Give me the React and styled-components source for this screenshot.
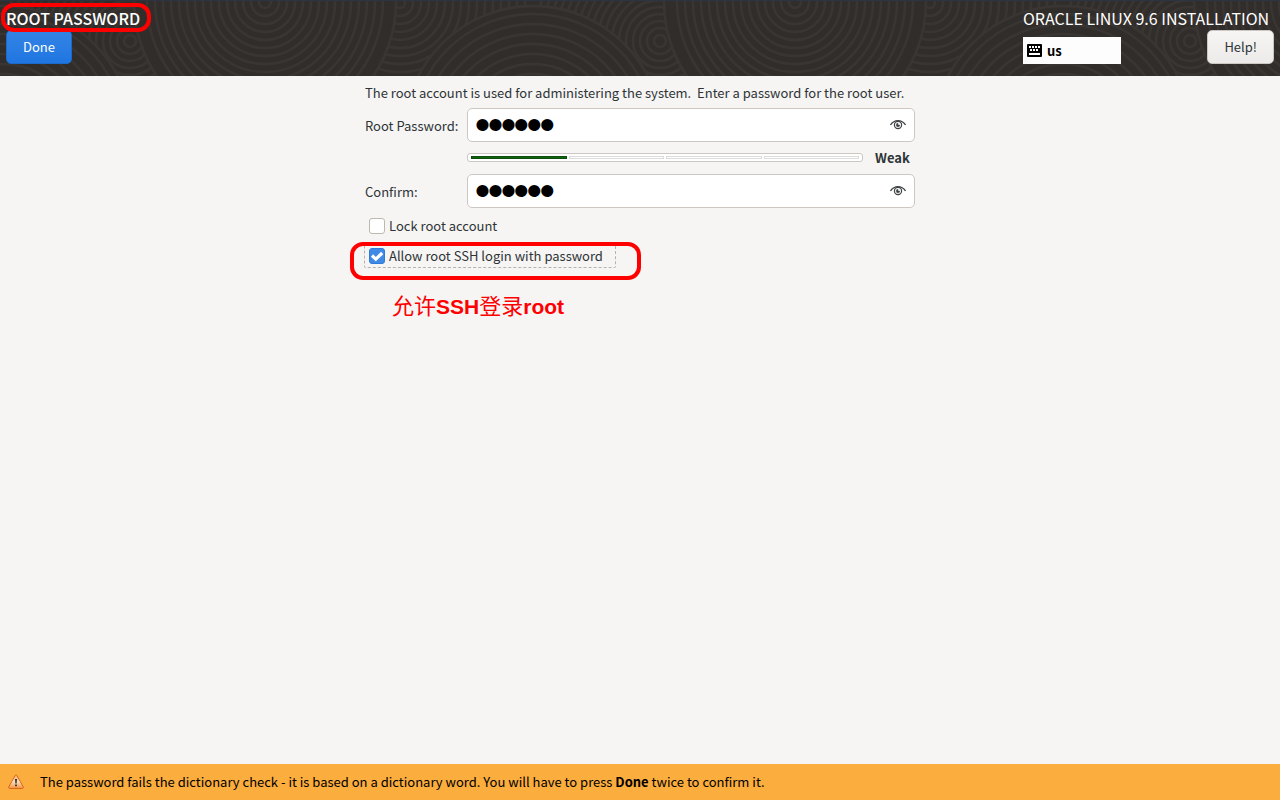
import React, { useState } from 'react';
import styled, { createGlobalStyle } from 'styled-components';

const GlobalStyle = createGlobalStyle`
  *, *::before, *::after { box-sizing: border-box; }
  html, body { margin: 0; background: #f6f5f4; }
  body, button, input {
    font-family: 'Noto Sans CJK SC', 'Noto Sans', sans-serif;
    font-size: 13px;
    line-height: 20px;
    color: #2e3436;
  }
`;

const Page = styled.div`
  display: flex;
  flex-direction: column;
  min-height: 100vh;
`;

const Header = styled.header`
  position: relative;
  display: flex;
  justify-content: space-between;
  padding: 6px 6px 12px;
  background: #312d2a;
  border-top: 1px solid #2c3442;
  overflow: hidden;
`;

const Texture = styled.svg`
  position: absolute;
  inset: 0;
  width: 100%;
  height: 100%;
`;

const HeaderSide = styled.div`
  position: relative;
  display: flex;
  flex-direction: column;
  gap: 1px;
  min-width: ${(p) => (p.$wide ? '251px' : '0')};
`;

const Title = styled.h1`
  position: relative;
  margin: 0;
  font-size: 16px;
  line-height: 22px;
  font-weight: ${(p) => (p.$strong ? 500 : 400)};
  color: #fff;
  white-space: nowrap;
`;

const ButtonRow = styled.div`
  display: flex;
  justify-content: space-between;
  align-items: flex-end;
`;

const Button = styled.button`
  height: 34px;
  padding: 0 16px;
  border-radius: 5px;
  border: 1px solid ${(p) => (p.$primary ? '#1b6acb' : '#cdc7c2')};
  background: ${(p) =>
    p.$primary
      ? 'linear-gradient(#3584e4, #1f76e1)'
      : 'linear-gradient(#f6f5f4, #edebe9)'};
  color: ${(p) => (p.$primary ? '#fff' : '#2e3436')};
`;

const LayoutButton = styled.button`
  display: flex;
  align-items: center;
  gap: 5px;
  width: 98px;
  height: 27px;
  padding: 0 4px;
  border: 0;
  background: #fdfdfd;
  color: #000;
  font-weight: 700;
`;

const Main = styled.main`
  flex: 1;
  display: flex;
  justify-content: center;
  align-items: flex-start;
  padding-top: 7px;
`;

const Form = styled.form`
  display: grid;
  grid-template-columns: 96px minmax(0, 1fr);
  column-gap: 6px;
  align-items: center;
  width: 100%;
  max-width: 550px;
`;

const Intro = styled.p`
  grid-column: 1 / -1;
  margin: 0 0 5px;
  white-space: pre-wrap;
`;

const Label = styled.label`
  padding-top: 2px;
`;

const Entry = styled.div`
  display: flex;
  align-items: center;
  height: 34px;
  padding: 0 8px;
  border: 1px solid #cdc7c2;
  border-radius: 5px;
  background: #fff;
`;

const Password = styled.input`
  flex: 1;
  min-width: 0;
  height: 32px;
  padding: 0;
  border: 0;
  outline: 0;
  background: transparent;
  color: #000;
  font-family: 'Liberation Sans', sans-serif;
  font-size: 37px;
  -webkit-text-stroke: 2px #000;
`;

const IconButton = styled.button`
  display: flex;
  padding: 0;
  border: 0;
  background: none;
`;

const Strength = styled.div`
  grid-column: 2;
  display: flex;
  align-items: center;
  height: 32px;
`;

const Meter = styled.div`
  flex: 1;
  display: flex;
  gap: 2px;
  height: 9px;
  margin-bottom: 2px;
  padding: 2px 3px;
  border: 1px solid #cdc7c2;
  border-radius: 3px;
  background: #fff;
`;

const Segment = styled.span`
  flex: 1;
  height: 3px;
  border: 1px solid ${(p) => (p.$filled ? '#0f4a0f' : '#dcdcda')};
  background: ${(p) => (p.$filled ? '#0a6a0a' : '#fff')};
`;

const StrengthText = styled.strong`
  width: 52px;
  padding-left: 12px;
  font-weight: 700;
`;

const Options = styled.div`
  grid-column: 1 / -1;
  display: flex;
  flex-direction: column;
  align-items: flex-start;
  gap: 6px;
  padding-top: 6px;
`;

const CheckLabel = styled.label`
  display: flex;
  align-items: center;
  gap: 4px;
  height: 24px;
  margin-left: -1px;
  padding: 0 12px 0 4px;
  border: 1px dashed ${(p) => (p.$focused ? '#b5b3b0' : 'transparent')};
  border-radius: 2px;
`;

const Checkbox = styled.input`
  appearance: none;
  width: 16px;
  height: 16px;
  margin: 0;
  border: 1px solid #bfb8b1;
  border-radius: 3px;
  background: #fff;

  &:checked {
    border-color: #2f7bd8;
    background: #3f8ae5
      url("data:image/svg+xml,%3Csvg xmlns='http://www.w3.org/2000/svg' viewBox='0 0 14 14'%3E%3Cpath d='M2 6.5l3.8 3.6L12.2 4' fill='none' stroke='white' stroke-width='3.2'/%3E%3C/svg%3E")
      center / 14px 14px no-repeat;
  }
`;

const Anchor = styled.div`
  position: relative;
`;

const Ring = styled.span`
  position: absolute;
  inset: ${(p) => p.$inset};
  border: 4px solid #fe0000;
  border-radius: 13px;
  pointer-events: none;
`;

const Note = styled.p`
  position: absolute;
  top: 100%;
  left: 27px;
  margin: 26px 0 0;
  color: #fe0000;
  font-family: 'Liberation Sans', sans-serif;
  font-size: 21px;
  line-height: 24px;
  font-weight: 700;
  white-space: nowrap;
`;

const Han = styled.span`
  font-family: 'Noto Sans CJK SC', sans-serif;
  font-size: 22px;
  line-height: 20px;
  font-weight: 400;
`;

const Warning = styled.footer`
  display: flex;
  align-items: center;
  gap: 16px;
  min-height: 36px;
  padding: 0 8px;
  background: #fbad3e;
  color: #000;

  p { margin: 0; }
`;

const rings = (cx, cy, start, step, end) => {
  const list = [];
  for (let r = start; r <= end; r += step) {
    list.push(<circle key={r} cx={cx} cy={cy} r={r} />);
  }
  return list;
};

function HeaderTexture() {
  return (
    <Texture aria-hidden="true">
      <defs>
        <pattern id="swirls" width="530" height="80" patternUnits="userSpaceOnUse">
          <rect width="530" height="80" fill="#312d2a" />
          <g fill="none" stroke="#393532" strokeWidth="2.4">
            {rings(130, 40, 6, 7, 128)}
            <path d="M397 0H530V80H380Z" fill="#312d2a" stroke="none" />
            {rings(400, 2, 5, 8, 128)}
            <circle cx="265" cy="1" r="131" fill="#312d2a" />
            {rings(265, 1, 6, 8, 124)}
            <circle cx="3" cy="134" r="129" fill="#312d2a" />
            {rings(3, 134, 51, 10, 122)}
            <circle cx="533" cy="134" r="129" fill="#312d2a" />
            {rings(533, 134, 51, 10, 122)}
          </g>
        </pattern>
      </defs>
      <rect width="100%" height="100%" fill="url(#swirls)" />
    </Texture>
  );
}

function KeyboardIcon() {
  return (
    <svg width="15" height="13" viewBox="0 0 15 13" aria-hidden="true">
      <rect width="15" height="13" rx="1" fill="#000" />
      <path
        d="M2 2h2v2H2zM5 2h2v2H5zM8 2h2v2H8zM11 2h2v2h-2zM3 5h2v2H3zM6 5h2v2H6zM9 5h2v2H9zM2 9h11v2H2z"
        fill="#fff"
      />
    </svg>
  );
}

function EyeIcon() {
  return (
    <svg width="16" height="16" viewBox="0 0 16 16" fill="none" stroke="#3f4446" aria-hidden="true">
      <path d="M0.5 8C2.4 5 5 3.6 8 3.6S13.6 5 15.5 8" strokeWidth="1.3" />
      <circle cx="8" cy="8" r="3.6" strokeWidth="1.2" />
      <path d="M8 6.3A1.8 1.8 0 1 0 9.8 8.1H8z" fill="#3f4446" strokeWidth="0.5" />
    </svg>
  );
}

function WarningIcon() {
  return (
    <svg width="16" height="16" viewBox="0 0 16 16" aria-hidden="true">
      <defs>
        <linearGradient id="warn" x1="0" y1="0" x2="0" y2="1">
          <stop offset="0" stopColor="#f7a460" />
          <stop offset="0.5" stopColor="#f8dfc0" />
          <stop offset="1" stopColor="#f0913f" />
        </linearGradient>
      </defs>
      <path
        d="M7.2 1.3Q8 .2 8.8 1.3L15.3 13Q15.7 14.4 14.4 14.5H1.6Q.3 14.4.7 13Z"
        fill="url(#warn)"
        stroke="#e0671a"
      />
      <path d="M7 5h2l-.4 4.5H7.4zM7.1 10.5h1.8v1.8H7.1z" fill="#3a2d22" />
    </svg>
  );
}

function PasswordEntry({ id, label }) {
  const [value, setValue] = useState('oracle');
  const [shown, setShown] = useState(false);
  return (
    <>
      <Label htmlFor={id}>{label}</Label>
      <Entry>
        <Password
          id={id}
          type={shown ? 'text' : 'password'}
          value={value}
          onChange={(e) => setValue(e.target.value)}
        />
        <IconButton type="button" aria-label="Show password" onClick={() => setShown(!shown)}>
          <EyeIcon />
        </IconButton>
      </Entry>
    </>
  );
}

export default function App() {
  return (
    <Page>
      <GlobalStyle />
      <Header>
        <HeaderTexture />
        <HeaderSide>
          <Title $strong>
            ROOT PASSWORD
            <Ring $inset="-4px -11px -3px -5px" />
          </Title>
          <ButtonRow>
            <Button type="button" $primary>Done</Button>
          </ButtonRow>
        </HeaderSide>
        <HeaderSide $wide>
          <Title as="div">ORACLE LINUX 9.6 INSTALLATION</Title>
          <ButtonRow>
            <LayoutButton type="button">
              <KeyboardIcon />
              us
            </LayoutButton>
            <Button type="button">Help!</Button>
          </ButtonRow>
        </HeaderSide>
      </Header>
      <Main>
        <Form onSubmit={(e) => e.preventDefault()}>
          <Intro>{'The root account is used for administering the system.  Enter a password for the root user.'}</Intro>
          <PasswordEntry id="root-password" label="Root Password:" />
          <Strength>
            <Meter role="meter" aria-label="Password strength" aria-valuemin={0} aria-valuemax={4} aria-valuenow={1}>
              <Segment $filled />
              <Segment />
              <Segment />
              <Segment />
            </Meter>
            <StrengthText>Weak</StrengthText>
          </Strength>
          <PasswordEntry id="confirm" label="Confirm:" />
          <Options>
            <CheckLabel>
              <Checkbox type="checkbox" />
              Lock root account
            </CheckLabel>
            <Anchor>
              <CheckLabel $focused>
                <Checkbox type="checkbox" defaultChecked />
                Allow root SSH login with password
              </CheckLabel>
              <Ring $inset="-2px -25px -12px -15px" />
              <Note>
                <Han>允许</Han>SSH<Han>登录</Han>root
              </Note>
            </Anchor>
          </Options>
        </Form>
      </Main>
      <Warning role="status">
        <WarningIcon />
        <p>
          The password fails the dictionary check - it is based on a dictionary word. You will have to press <b>Done</b> twice to confirm it.
        </p>
      </Warning>
    </Page>
  );
}
